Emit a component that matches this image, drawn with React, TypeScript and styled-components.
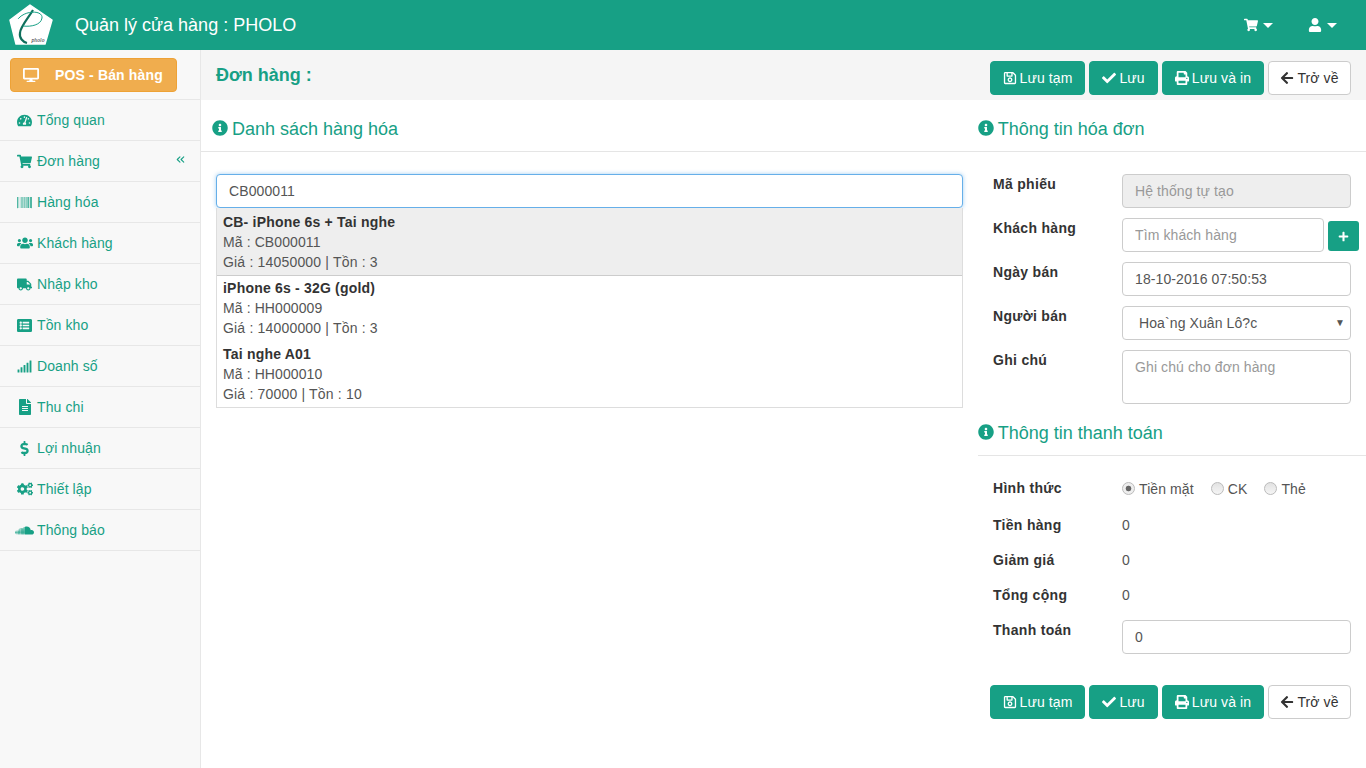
import { FC, ReactNode } from 'react';
import styled, { createGlobalStyle } from 'styled-components';
import {
	FaArrowLeft,
	FaBarcode,
	FaCheck,
	FaCogs,
	FaDesktop,
	FaDollarSign,
	FaFileAlt,
	FaInfoCircle,
	FaListAlt,
	FaPlus,
	FaPrint,
	FaRegSave,
	FaShoppingCart,
	FaSignal,
	FaSoundcloud,
	FaTachometerAlt,
	FaTruck,
	FaUser,
	FaUsers,
} from 'react-icons/fa';
import { FiChevronsLeft } from 'react-icons/fi';

const GREEN = '#17a085';

const GlobalStyle = createGlobalStyle`
	* { box-sizing: border-box; }
	html, body { margin: 0; padding: 0; background: #fff; }
	body {
		font-family: "Liberation Sans", Arial, sans-serif;
		font-size: 14px;
		line-height: 20px;
		letter-spacing: 0.1px;
		color: #333;
		overflow: hidden;
	}
`;

const menu = [
	{ label: 'Tổng quan', icon: <FaTachometerAlt />, size: 15 },
	{ label: 'Đơn hàng', icon: <FaShoppingCart />, size: 15, open: true },
	{ label: 'Hàng hóa', icon: <FaBarcode />, size: 15 },
	{ label: 'Khách hàng', icon: <FaUsers />, size: 16 },
	{ label: 'Nhập kho', icon: <FaTruck />, size: 15 },
	{ label: 'Tồn kho', icon: <FaListAlt />, size: 15 },
	{ label: 'Doanh số', icon: <FaSignal />, size: 15 },
	{ label: 'Thu chi', icon: <FaFileAlt />, size: 16 },
	{ label: 'Lợi nhuận', icon: <FaDollarSign />, size: 15 },
	{ label: 'Thiết lập', icon: <FaCogs />, size: 16 },
	{ label: 'Thông báo', icon: <FaSoundcloud />, size: 19 },
];

const products = [
	{ name: 'CB- iPhone 6s + Tai nghe', code: 'CB000011', price: '14050000', stock: '3', active: true },
	{ name: 'iPhone 6s - 32G (gold)', code: 'HH000009', price: '14000000', stock: '3', height: 66 },
	{ name: 'Tai nghe A01', code: 'HH000010', price: '70000', stock: '10', height: 65 },
];

const Logo: FC = () => (
	<svg width="44" height="44" viewBox="0 0 44 44">
		<polygon points="21,2 43,17 36,41 7,41 1,17" fill="#fff" stroke="#fff" strokeWidth="1.5" strokeLinejoin="round" />
		<path d="M24 7 C20 14 11 24 11 30 C10 35 14 39 18 40" fill="none" stroke="#0f6f5c" strokeWidth="2.2" />
		<path d="M9 16 C16 7 34 7 33 15 C32 22 22 24 14 23" fill="none" stroke={GREEN} strokeWidth="1" />
		<text x="29" y="39" fontSize="5.5" fontStyle="italic" fontFamily="Liberation Serif, serif" fill="#222" textAnchor="middle">
			pholo
		</text>
	</svg>
);

const ActionButtons: FC = () => (
	<Actions>
		<Button $width={95}>
			<FaRegSave /> Lưu tạm
		</Button>
		<Button $width={69}>
			<FaCheck /> Lưu
		</Button>
		<Button $width={102}>
			<FaPrint /> Lưu và in
		</Button>
		<BackButton $width={83}>
			<FaArrowLeft /> Trở về
		</BackButton>
	</Actions>
);

const Field: FC<{ label: string; children: ReactNode }> = ({ label, children }) => (
	<FormRow>
		<Label>{label}</Label>
		{children}
	</FormRow>
);

const App: FC = () => (
	<>
		<GlobalStyle />
		<Header>
			<Brand>
				<Logo />
				<BrandTitle>Quản lý cửa hàng : PHOLO</BrandTitle>
			</Brand>
			<HeaderTools>
				<HeaderTool>
					<FaShoppingCart />
					<Caret />
				</HeaderTool>
				<HeaderTool>
					<FaUser />
					<Caret />
				</HeaderTool>
			</HeaderTools>
		</Header>
		<Body>
			<Sidebar>
				<PosWrap>
					<PosButton>
						<FaDesktop />
						POS - Bán hàng
					</PosButton>
				</PosWrap>
				<Menu>
					{menu.map((item) => (
						<MenuItem key={item.label}>
							<MenuIcon $size={item.size}>{item.icon}</MenuIcon>
							{item.label}
							{item.open && (
								<MenuArrow>
									<FiChevronsLeft />
								</MenuArrow>
							)}
						</MenuItem>
					))}
				</Menu>
			</Sidebar>
			<Main>
				<TopBar>
					<PageTitle>Đơn hàng :</PageTitle>
					<ActionButtons />
				</TopBar>
				<Columns>
					<LeftColumn>
						<SectionHead>
							<FaInfoCircle /> Danh sách hàng hóa
						</SectionHead>
						<SearchArea>
							<SearchInput readOnly value="CB000011" />
							<Suggestions>
								{products.map((p) => (
									<Suggestion key={p.code} $active={p.active} $height={p.height}>
										<strong>{p.name}</strong>
										<div>Mã : {p.code}</div>
										<PriceLine>
											Giá : {p.price} | Tồn : {p.stock}
										</PriceLine>
									</Suggestion>
								))}
							</Suggestions>
						</SearchArea>
					</LeftColumn>
					<RightColumn>
						<SideHead>
							<FaInfoCircle /> Thông tin hóa đơn
						</SideHead>
						<Form>
							<Field label="Mã phiếu">
								<Input disabled placeholder="Hệ thống tự tạo" />
							</Field>
							<Field label="Khách hàng">
								<CustomerInput placeholder="Tìm khách hàng" />
								<PlusButton>
									<FaPlus />
								</PlusButton>
							</Field>
							<Field label="Ngày bán">
								<Input readOnly value="18-10-2016 07:50:53" />
							</Field>
							<Field label="Người bán">
								<SelectBox>
									Hoa`ng Xuân Lô?c
									<SelectArrow>▼</SelectArrow>
								</SelectBox>
							</Field>
							<Field label="Ghi chú">
								<Note placeholder="Ghi chú cho đơn hàng" />
							</Field>
						</Form>
						<PayHead>
							<FaInfoCircle /> Thông tin thanh toán
						</PayHead>
						<PayForm>
							<PayRow $height={37}>
								<Label>Hình thức</Label>
								<Radios>
									<RadioLabel>
										<Radio $checked />
										Tiền mặt
									</RadioLabel>
									<RadioLabel>
										<Radio />
										CK
									</RadioLabel>
									<RadioLabel>
										<Radio />
										Thẻ
									</RadioLabel>
								</Radios>
							</PayRow>
							<PayRow>
								<Label>Tiền hàng</Label>
								<span>0</span>
							</PayRow>
							<PayRow>
								<Label>Giảm giá</Label>
								<span>0</span>
							</PayRow>
							<PayRow>
								<Label>Tổng cộng</Label>
								<span>0</span>
							</PayRow>
							<Field label="Thanh toán">
								<Input readOnly value="0" />
							</Field>
						</PayForm>
						<BottomActions>
							<ActionButtons />
						</BottomActions>
					</RightColumn>
				</Columns>
			</Main>
		</Body>
	</>
);

const Header = styled.header`
	height: 50px;
	background: ${GREEN};
	color: #fff;
	display: flex;
	align-items: center;
	justify-content: space-between;
	padding: 0 29px 0 9px;
`;

const Brand = styled.div`
	display: flex;
	align-items: center;
	gap: 22px;
`;

const BrandTitle = styled.div`
	font-size: 18px;
	line-height: 50px;
	letter-spacing: 0;
`;

const HeaderTools = styled.div`
	display: flex;
	gap: 35px;
`;

const HeaderTool = styled.div`
	display: flex;
	align-items: center;
	gap: 5px;
	font-size: 14px;
`;

const Caret = styled.span`
	width: 0;
	height: 0;
	border-left: 5px solid transparent;
	border-right: 5px solid transparent;
	border-top: 5px solid #fff;
`;

const Body = styled.div`
	display: flex;
	height: 718px;
`;

const Sidebar = styled.aside`
	width: 201px;
	flex: none;
	background: #f8f8f8;
	border-right: 1px solid #e7e7e7;
`;

const PosWrap = styled.div`
	height: 50px;
	padding: 8px 23px 0 10px;
`;

const PosButton = styled.div`
	height: 34px;
	background: #f0ad4e;
	border: 1px solid #eea236;
	border-radius: 4px;
	color: #fff;
	font-weight: bold;
	letter-spacing: 0.15px;
	display: flex;
	align-items: center;
	padding-left: 12px;
	gap: 16px;

	svg {
		font-size: 16px;
	}
`;

const Menu = styled.nav`
	border-top: 1px solid #e7e7e7;
	margin-top: -1px;
`;

const MenuItem = styled.div`
	position: relative;
	height: 41px;
	border-bottom: 1px solid #e7e7e7;
	color: ${GREEN};
	display: flex;
	align-items: center;
	padding-left: 15px;
`;

const MenuIcon = styled.span<{ $size: number }>`
	width: 22px;
	display: flex;
	justify-content: center;
	padding-right: 3px;
	font-size: ${(p) => p.$size}px;
`;

const MenuArrow = styled.span`
	position: absolute;
	right: 13px;
	top: 12px;
	display: flex;
	font-size: 13px;
`;

const Main = styled.main`
	flex: 1;
	min-width: 0;
`;

const TopBar = styled.div`
	height: 50px;
	background: #f5f5f5;
	padding: 11px 15px 0;
	display: flex;
	justify-content: space-between;
`;

const PageTitle = styled.h1`
	margin: 2px 0 0;
	font-size: 18px;
	line-height: 24px;
	font-weight: bold;
	letter-spacing: 0;
	color: ${GREEN};
`;

const Actions = styled.div`
	display: flex;
	gap: 4px;
`;

const Button = styled.div<{ $width: number }>`
	width: ${(p) => p.$width}px;
	height: 34px;
	border: 1px solid ${GREEN};
	border-radius: 4px;
	background: ${GREEN};
	color: #fff;
	display: flex;
	align-items: center;
	justify-content: center;
	gap: 3px;
	white-space: nowrap;

	svg {
		font-size: 14px;
	}
`;

const BackButton = styled(Button)`
	background: #fff;
	border-color: #ccc;
	color: #333;
`;

const Columns = styled.div`
	display: flex;
`;

const LeftColumn = styled.section`
	width: 762px;
	flex: none;
`;

const RightColumn = styled.section`
	flex: 1;
	min-width: 0;
	padding-left: 15px;
`;

const SectionHead = styled.h2`
	margin: 0;
	height: 52px;
	padding: 19px 0 0 11px;
	font-size: 18px;
	line-height: 20px;
	font-weight: normal;
	letter-spacing: 0;
	color: ${GREEN};
	border-bottom: 1px solid #e5e5e5;

	svg {
		font-size: 16px;
		vertical-align: -1px;
		margin-right: -1px;
	}
`;

const SideHead = styled(SectionHead)`
	margin-left: -15px;
	padding-left: 15px;
`;

const PayHead = styled(SideHead)`
	height: 43px;
	margin: 9px 0 0;
	padding: 10px 0 0;
`;

const SearchArea = styled.div`
	padding: 22px 0 0 15px;
`;

const SearchInput = styled.input`
	display: block;
	width: 100%;
	height: 34px;
	padding: 6px 12px;
	border: 1px solid #66afe9;
	border-radius: 4px;
	box-shadow: 0 0 4px rgba(102, 175, 233, 0.6);
	outline: none;
	font: inherit;
	letter-spacing: inherit;
	color: #555;
`;

const Suggestions = styled.div`
	border: 1px solid #ddd;
	border-top: none;
`;

const Suggestion = styled.div<{ $active?: boolean; $height?: number }>`
	padding: ${(p) => (p.$active ? '4px' : '2px')} 6px 0;
	height: ${(p) => p.$height ?? 68}px;
	background: ${(p) => (p.$active ? '#eee' : '#fff')};
	border-bottom: ${(p) => (p.$active ? '1px solid #ccc' : 'none')};
	color: #555;

	strong {
		display: block;
		color: #333;
		letter-spacing: 0.2px;
	}
`;

const PriceLine = styled.div`
	letter-spacing: 0.18px;
`;

const Form = styled.div`
	padding: 22px 15px 0;
	display: flex;
	flex-direction: column;
	gap: 10px;
`;

const FormRow = styled.div`
	display: flex;
	position: relative;
`;

const Label = styled.label`
	width: 129px;
	flex: none;
	font-weight: bold;
	line-height: 20px;
	letter-spacing: 0.3px;
`;

const Input = styled.input`
	width: 229px;
	height: 34px;
	padding: 6px 12px;
	border: 1px solid #ccc;
	border-radius: 4px;
	font: inherit;
	letter-spacing: inherit;
	color: #555;
	outline: none;
	background: #fff;

	&::placeholder {
		color: #999;
	}

	&:disabled {
		background: #eee;
	}
`;

const CustomerInput = styled(Input)`
	width: 202px;
`;

const PlusButton = styled.div`
	position: absolute;
	left: 335px;
	top: 3px;
	width: 31px;
	height: 30px;
	border-radius: 3px;
	background: ${GREEN};
	color: #fff;
	display: flex;
	align-items: center;
	justify-content: center;
	font-size: 11px;
`;

const SelectBox = styled.div`
	position: relative;
	width: 229px;
	height: 34px;
	padding: 6px 16px;
	border: 1px solid #ccc;
	border-radius: 4px;
	color: #555;
`;

const SelectArrow = styled.span`
	position: absolute;
	right: 5px;
	top: 6px;
	font-size: 10px;
`;

const Note = styled.textarea`
	width: 229px;
	height: 54px;
	padding: 6px 12px;
	border: 1px solid #ccc;
	border-radius: 4px;
	font: inherit;
	letter-spacing: inherit;
	resize: none;
	outline: none;

	&::placeholder {
		color: #999;
	}
`;

const PayForm = styled.div`
	padding: 22px 15px 0;
`;

const PayRow = styled.div<{ $height?: number }>`
	display: flex;
	height: ${(p) => p.$height ?? 35}px;
	color: #555;

	label {
		color: #333;
	}
`;

const Radios = styled.div`
	display: flex;
	gap: 17px;
`;

const RadioLabel = styled.span`
	display: flex;
	align-items: flex-start;
	gap: 4px;
	line-height: 22px;
`;

const Radio = styled.span<{ $checked?: boolean }>`
	width: 13px;
	height: 13px;
	margin-top: 4px;
	border: 1px solid #bbb;
	border-radius: 50%;
	background: ${(p) =>
		p.$checked ? 'radial-gradient(circle, #666 0 2.5px, #eee 3.2px)' : 'linear-gradient(#e2e2e2, #f5f5f5)'};
`;

const BottomActions = styled.div`
	display: flex;
	justify-content: flex-end;
	padding: 31px 15px 0 0;
`;

export default App;
